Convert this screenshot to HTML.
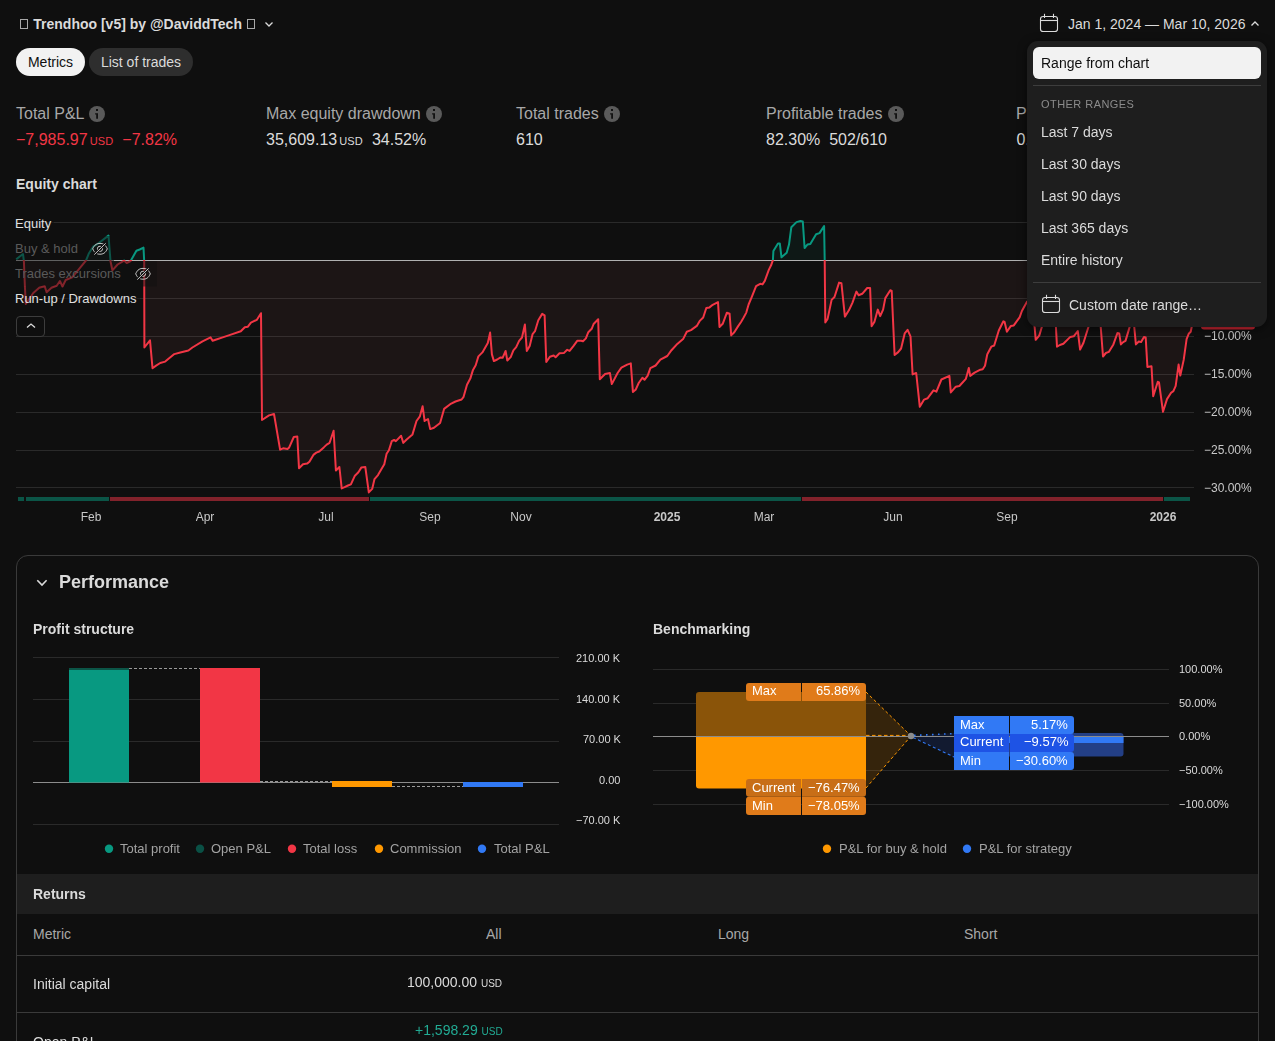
<!DOCTYPE html>
<html><head><meta charset="utf-8">
<style>
*{box-sizing:border-box;margin:0;padding:0}
html,body{width:1275px;height:1041px;overflow:hidden;background:#0f0f0f;font-family:"Liberation Sans",sans-serif;color:#dbdbdb}
.a{position:absolute;white-space:nowrap}
.tofu{display:inline-block;width:8px;height:11px;border:1px solid #dbdbdb;vertical-align:-1px}
.pill{position:absolute;top:48px;height:28px;border-radius:14px;font-size:14px;line-height:28px;text-align:center}
.lbl{font-size:16px;color:#a8a8a8}
.val{font-size:16px;color:#dbdbdb}
.usd{font-size:11px;letter-spacing:0.2px;margin-left:2px}
.info{display:inline-block;vertical-align:-3px;margin-left:1px}
.ax{font-size:12px;color:#c8c8c8;will-change:transform}
.xl{font-size:12px;color:#c8c8c8;transform:translateX(-50%);will-change:transform}
.dd{position:absolute;left:1027px;top:41px;width:240px;height:286px;background:#1e1e1e;border-radius:11px;will-change:transform;box-shadow:0 2px 10px rgba(0,0,0,0.55)}
.di{position:absolute;left:14px;font-size:14px;color:#dbdbdb}
.leg{font-size:13px}
.gs{will-change:transform}
.psl{font-size:11px;color:#dbdbdb;will-change:transform}
.pleg{font-size:13px;color:#a3a3a3;will-change:transform}
.blab{font-size:13px;color:#fff;line-height:18px;will-change:transform}
</style></head><body>
<!-- header -->
<div class="a" style="left:20px;top:19px;width:8px;height:10px;border:1px solid #a8a8a8"></div>
<div class="a" style="left:33.3px;top:16px;font-size:14px;font-weight:bold;color:#dbdbdb">Trendhoo [v5] by @DaviddTech</div>
<div class="a" style="left:247px;top:19px;width:8px;height:10px;border:1px solid #a8a8a8"></div>
<svg class="a" style="left:263px;top:19px" width="12" height="10" viewBox="0 0 12 10"><path d="M2.5 3.5 L6 7 L9.5 3.5" fill="none" stroke="#dbdbdb" stroke-width="1.3"/></svg>

<div class="pill" style="left:16px;width:69px;background:#f2f2f2;color:#0f0f0f">Metrics</div>
<div class="pill" style="left:89px;width:104px;background:#2e2e2e;color:#dbdbdb">List of trades</div>

<!-- date range -->
<svg class="a" style="left:1039px;top:13px" width="20" height="20" viewBox="0 0 20 20"><rect x="1.5" y="3.5" width="17" height="15" rx="2.6" fill="none" stroke="#dbdbdb" stroke-width="1.1"/><line x1="1.5" y1="7.5" x2="18.5" y2="7.5" stroke="#dbdbdb" stroke-width="1.1"/><line x1="5.5" y1="0.8" x2="5.5" y2="5" stroke="#dbdbdb" stroke-width="1.1"/><line x1="14.5" y1="0.8" x2="14.5" y2="5" stroke="#dbdbdb" stroke-width="1.1"/></svg>
<div class="a" style="left:1068px;top:16px;font-size:14px;color:#dbdbdb">Jan 1, 2024 — Mar 10, 2026</div>
<svg class="a" style="left:1249px;top:19px" width="12" height="10" viewBox="0 0 12 10"><path d="M2.5 6.5 L6 3 L9.5 6.5" fill="none" stroke="#dbdbdb" stroke-width="1.3"/></svg>

<!-- metrics -->
<div class="a lbl" style="left:16px;top:105px">Total P&amp;L <svg class="info" width="16" height="16" viewBox="0 0 16 16"><circle cx="8" cy="8" r="8" fill="#5a5a5a"/><rect x="7" y="3" width="2" height="2" fill="#111"/><path d="M6.1 7.2 H9 V12.8 H7.2 V8.4 H6.1 Z" fill="#111"/></svg></div>
<div class="a val" style="left:16px;top:131px;color:#f23645">−7,985.97<span class="usd">USD</span>&nbsp; −7.82%</div>
<div class="a lbl" style="left:266px;top:105px">Max equity drawdown <svg class="info" width="16" height="16" viewBox="0 0 16 16"><circle cx="8" cy="8" r="8" fill="#5a5a5a"/><rect x="7" y="3" width="2" height="2" fill="#111"/><path d="M6.1 7.2 H9 V12.8 H7.2 V8.4 H6.1 Z" fill="#111"/></svg></div>
<div class="a val" style="left:266px;top:131px">35,609.13<span class="usd">USD</span>&nbsp; 34.52%</div>
<div class="a lbl" style="left:516px;top:105px">Total trades <svg class="info" width="16" height="16" viewBox="0 0 16 16"><circle cx="8" cy="8" r="8" fill="#5a5a5a"/><rect x="7" y="3" width="2" height="2" fill="#111"/><path d="M6.1 7.2 H9 V12.8 H7.2 V8.4 H6.1 Z" fill="#111"/></svg></div>
<div class="a val" style="left:516px;top:131px">610</div>
<div class="a lbl" style="left:766px;top:105px">Profitable trades <svg class="info" width="16" height="16" viewBox="0 0 16 16"><circle cx="8" cy="8" r="8" fill="#5a5a5a"/><rect x="7" y="3" width="2" height="2" fill="#111"/><path d="M6.1 7.2 H9 V12.8 H7.2 V8.4 H6.1 Z" fill="#111"/></svg></div>
<div class="a val" style="left:766px;top:131px">82.30%&nbsp; 502/610</div>
<div class="a lbl" style="left:1016px;top:105px">Profit factor</div>
<div class="a val" style="left:1016.5px;top:131px">0.98</div>

<div class="a" style="left:16px;top:176px;font-size:14px;font-weight:bold">Equity chart</div>

<!-- chart -->
<svg class="a" style="left:0;top:0" width="1275" height="541" viewBox="0 0 1275 541">
<defs>
<clipPath id="above"><rect x="0" y="0" width="1275" height="260"/></clipPath>
<clipPath id="below"><rect x="0" y="260" width="1275" height="300"/></clipPath>
</defs>
<g stroke="#2a2a2a" stroke-width="1">
<line x1="16" y1="222.5" x2="1194" y2="222.5"/>
<line x1="16" y1="298.5" x2="1194" y2="298.5"/>
<line x1="16" y1="336.5" x2="1194" y2="336.5"/>
<line x1="16" y1="374.5" x2="1194" y2="374.5"/>
<line x1="16" y1="412.5" x2="1194" y2="412.5"/>
<line x1="16" y1="450.5" x2="1194" y2="450.5"/>
<line x1="16" y1="487.5" x2="1194" y2="487.5"/>
</g>
<path d="M16.2,260 L16.2,259.3 L23.0,254.0 L23.9,261.2 L24.9,286.5 L25.8,304.0 L33.3,293.0 L39.2,287.8 L44.7,286.2 L46.6,292.3 L51.5,287.8 L56.7,285.8 L59.9,281.0 L62.5,286.5 L65.7,280.0 L72.2,277.4 L85.9,260.7 L89.0,253.2 L93.4,246.3 L97.8,243.8 L108.5,235.6 L110.5,261.2 L112.4,270.3 L117.6,264.5 L124.1,260.6 L126.7,263.0 L130.6,261.0 L136.4,250.8 L139.7,249.5 L143.5,247.6 L144.2,261.2 L144.4,347.5 L150.0,340.4 L152.5,368.2 L156.1,365.6 L160.2,363.0 L165.2,361.6 L174.3,354.1 L180.3,352.5 L188.4,350.5 L192.4,347.5 L202.5,341.4 L210.6,337.4 L212.6,340.8 L215.6,339.8 L222.7,337.4 L228.7,335.4 L240.8,331.3 L244.8,327.3 L247.9,326.7 L250.9,322.7 L256.9,319.8 L261.0,313.2 L262.0,420.0 L269.0,415.4 L274.0,414.0 L280.1,449.7 L283.1,448.3 L287.5,449.0 L289.2,447.4 L293.8,437.0 L297.3,436.5 L299.0,468.2 L303.0,464.2 L307.1,463.6 L309.4,461.8 L313.4,454.9 L316.3,452.6 L319.2,451.5 L323.8,447.4 L326.7,444.6 L329.6,442.8 L333.6,430.7 L335.9,470.5 L339.4,467.0 L341.7,488.4 L344.6,487.2 L348.0,485.5 L350.9,484.3 L354.9,475.7 L358.4,472.2 L361.3,467.6 L365.3,467.0 L368.8,492.4 L372.2,488.9 L374.5,479.1 L378.0,475.1 L380.9,469.9 L384.3,464.2 L386.6,453.8 L388.9,450.3 L391.8,441.1 L394.1,439.9 L395.9,441.1 L401.1,435.8 L403.3,442.9 L406.4,439.8 L412.5,434.4 L416.5,421.0 L419.9,416.3 L422.6,406.2 L424.6,421.0 L428.0,419.0 L430.2,429.1 L434.0,427.7 L440.1,423.0 L444.1,408.9 L450.2,404.2 L455.5,401.5 L461.6,399.5 L463.6,396.8 L467.0,384.7 L470.3,378.6 L473.0,369.9 L475.7,365.2 L478.4,356.4 L482.4,352.4 L487.8,343.0 L490.1,332.6 L491.9,354.4 L493.9,361.1 L497.2,359.5 L500.6,357.4 L502.6,357.8 L505.6,351.0 L507.3,360.5 L510.7,357.1 L513.4,350.4 L516.2,347.1 L519.1,340.8 L522.0,337.5 L524.9,324.5 L526.8,350.9 L529.7,346.1 L532.6,334.1 L535.0,331.2 L538.3,320.2 L542.2,313.9 L544.6,315.4 L546.3,362.0 L549.9,356.7 L553.7,355.5 L555.6,357.2 L559.5,353.3 L563.8,353.1 L567.2,349.8 L569.6,350.9 L573.4,346.1 L577.2,340.8 L581.1,340.8 L583.0,341.3 L585.9,338.4 L588.3,332.2 L591.7,328.8 L593.6,324.0 L598.2,319.2 L599.8,379.3 L605.1,374.0 L609.9,373.0 L611.8,384.1 L617.6,373.0 L621.4,367.7 L627.2,364.6 L630.8,363.4 L632.9,391.9 L635.6,389.8 L638.7,383.0 L642.4,377.7 L644.5,379.8 L647.7,375.6 L650.4,368.2 L655.6,365.5 L660.4,359.7 L667.3,356.0 L671.5,350.2 L677.3,343.9 L683.1,339.1 L686.8,331.7 L691.0,330.1 L696.8,325.9 L700.0,320.6 L703.2,317.5 L706.3,308.0 L709.5,307.4 L712.7,304.8 L718.0,302.1 L719.5,327.0 L722.7,323.8 L726.9,312.7 L729.6,313.8 L731.2,335.4 L734.3,332.3 L738.0,326.4 L741.2,321.7 L743.5,317.8 L746.3,312.6 L748.6,304.5 L751.5,297.6 L756.1,286.1 L760.2,283.8 L762.5,284.4 L764.8,280.9 L768.8,269.9 L771.1,265.3 L772.9,260.1 L773.4,250.9 L778.0,243.4 L779.8,243.4 L781.5,257.3 L786.7,252.7 L789.0,244.6 L791.3,227.3 L796.5,222.1 L800.5,221.0 L802.8,221.5 L804.6,248.0 L807.4,244.6 L810.3,244.0 L816.1,234.2 L819.5,233.1 L824.1,226.1 L824.7,260.1 L825.3,322.4 L827.6,318.9 L831.6,299.9 L834.5,297.0 L839.1,282.6 L841.4,283.2 L844.9,316.6 L848.9,310.3 L852.4,302.8 L856.4,291.6 L858.6,295.2 L862.2,293.8 L867.2,288.0 L870.1,288.0 L871.6,326.2 L874.4,321.9 L877.8,309.6 L880.2,316.1 L883.1,309.6 L885.3,298.1 L890.3,290.2 L891.7,290.9 L894.6,355.0 L898.2,352.1 L901.1,348.5 L904.7,333.4 L907.6,329.8 L910.5,336.3 L912.6,374.4 L916.2,373.0 L919.8,406.8 L924.1,399.6 L927.7,398.2 L933.5,390.3 L936.4,391.7 L941.4,379.5 L949.4,375.9 L950.8,392.4 L955.8,386.7 L959.4,386.0 L965.9,378.8 L968.8,368.0 L970.2,375.9 L974.6,372.6 L980.4,369.7 L982.7,369.2 L985.0,365.7 L987.3,354.2 L991.3,346.7 L994.2,345.5 L998.8,330.5 L1003.4,321.3 L1004.6,321.9 L1006.9,331.7 L1010.9,325.9 L1013.8,325.4 L1019.6,317.3 L1021.9,311.0 L1027.0,301.7 L1031.0,300.0 L1034.6,326.5 L1035.7,339.8 L1039.2,335.7 L1042.0,326.5 L1046.0,310.0 L1052.0,310.0 L1055.9,326.5 L1057.0,346.7 L1059.9,345.0 L1063.4,343.8 L1070.3,336.9 L1073.7,336.3 L1077.8,331.1 L1080.1,349.6 L1083.5,342.7 L1088.6,326.5 L1092.0,315.0 L1098.0,315.0 L1100.7,326.5 L1103.0,356.5 L1105.9,353.0 L1108.8,351.9 L1113.4,344.4 L1117.5,332.9 L1119.2,333.4 L1120.9,344.4 L1123.2,342.1 L1125.5,340.9 L1129.6,327.1 L1132.0,318.0 L1134.2,326.5 L1135.9,344.4 L1138.8,341.5 L1141.1,342.1 L1144.0,336.9 L1145.7,337.5 L1147.4,366.9 L1151.5,366.3 L1153.2,396.3 L1157.8,381.8 L1159.0,382.4 L1163.0,411.8 L1167.0,399.1 L1171.1,392.8 L1173.4,391.1 L1175.7,385.9 L1178.6,364.6 L1180.3,375.5 L1183.7,359.9 L1186.6,339.2 L1188.9,333.4 L1190.7,331.7 L1191.8,326.5 L1193.0,322.0 L1193.0,260 Z" fill="#f27070" fill-opacity="0.058" clip-path="url(#below)"/>
<path d="M16.2,260 L16.2,259.3 L23.0,254.0 L23.9,261.2 L24.9,286.5 L25.8,304.0 L33.3,293.0 L39.2,287.8 L44.7,286.2 L46.6,292.3 L51.5,287.8 L56.7,285.8 L59.9,281.0 L62.5,286.5 L65.7,280.0 L72.2,277.4 L85.9,260.7 L89.0,253.2 L93.4,246.3 L97.8,243.8 L108.5,235.6 L110.5,261.2 L112.4,270.3 L117.6,264.5 L124.1,260.6 L126.7,263.0 L130.6,261.0 L136.4,250.8 L139.7,249.5 L143.5,247.6 L144.2,261.2 L144.4,347.5 L150.0,340.4 L152.5,368.2 L156.1,365.6 L160.2,363.0 L165.2,361.6 L174.3,354.1 L180.3,352.5 L188.4,350.5 L192.4,347.5 L202.5,341.4 L210.6,337.4 L212.6,340.8 L215.6,339.8 L222.7,337.4 L228.7,335.4 L240.8,331.3 L244.8,327.3 L247.9,326.7 L250.9,322.7 L256.9,319.8 L261.0,313.2 L262.0,420.0 L269.0,415.4 L274.0,414.0 L280.1,449.7 L283.1,448.3 L287.5,449.0 L289.2,447.4 L293.8,437.0 L297.3,436.5 L299.0,468.2 L303.0,464.2 L307.1,463.6 L309.4,461.8 L313.4,454.9 L316.3,452.6 L319.2,451.5 L323.8,447.4 L326.7,444.6 L329.6,442.8 L333.6,430.7 L335.9,470.5 L339.4,467.0 L341.7,488.4 L344.6,487.2 L348.0,485.5 L350.9,484.3 L354.9,475.7 L358.4,472.2 L361.3,467.6 L365.3,467.0 L368.8,492.4 L372.2,488.9 L374.5,479.1 L378.0,475.1 L380.9,469.9 L384.3,464.2 L386.6,453.8 L388.9,450.3 L391.8,441.1 L394.1,439.9 L395.9,441.1 L401.1,435.8 L403.3,442.9 L406.4,439.8 L412.5,434.4 L416.5,421.0 L419.9,416.3 L422.6,406.2 L424.6,421.0 L428.0,419.0 L430.2,429.1 L434.0,427.7 L440.1,423.0 L444.1,408.9 L450.2,404.2 L455.5,401.5 L461.6,399.5 L463.6,396.8 L467.0,384.7 L470.3,378.6 L473.0,369.9 L475.7,365.2 L478.4,356.4 L482.4,352.4 L487.8,343.0 L490.1,332.6 L491.9,354.4 L493.9,361.1 L497.2,359.5 L500.6,357.4 L502.6,357.8 L505.6,351.0 L507.3,360.5 L510.7,357.1 L513.4,350.4 L516.2,347.1 L519.1,340.8 L522.0,337.5 L524.9,324.5 L526.8,350.9 L529.7,346.1 L532.6,334.1 L535.0,331.2 L538.3,320.2 L542.2,313.9 L544.6,315.4 L546.3,362.0 L549.9,356.7 L553.7,355.5 L555.6,357.2 L559.5,353.3 L563.8,353.1 L567.2,349.8 L569.6,350.9 L573.4,346.1 L577.2,340.8 L581.1,340.8 L583.0,341.3 L585.9,338.4 L588.3,332.2 L591.7,328.8 L593.6,324.0 L598.2,319.2 L599.8,379.3 L605.1,374.0 L609.9,373.0 L611.8,384.1 L617.6,373.0 L621.4,367.7 L627.2,364.6 L630.8,363.4 L632.9,391.9 L635.6,389.8 L638.7,383.0 L642.4,377.7 L644.5,379.8 L647.7,375.6 L650.4,368.2 L655.6,365.5 L660.4,359.7 L667.3,356.0 L671.5,350.2 L677.3,343.9 L683.1,339.1 L686.8,331.7 L691.0,330.1 L696.8,325.9 L700.0,320.6 L703.2,317.5 L706.3,308.0 L709.5,307.4 L712.7,304.8 L718.0,302.1 L719.5,327.0 L722.7,323.8 L726.9,312.7 L729.6,313.8 L731.2,335.4 L734.3,332.3 L738.0,326.4 L741.2,321.7 L743.5,317.8 L746.3,312.6 L748.6,304.5 L751.5,297.6 L756.1,286.1 L760.2,283.8 L762.5,284.4 L764.8,280.9 L768.8,269.9 L771.1,265.3 L772.9,260.1 L773.4,250.9 L778.0,243.4 L779.8,243.4 L781.5,257.3 L786.7,252.7 L789.0,244.6 L791.3,227.3 L796.5,222.1 L800.5,221.0 L802.8,221.5 L804.6,248.0 L807.4,244.6 L810.3,244.0 L816.1,234.2 L819.5,233.1 L824.1,226.1 L824.7,260.1 L825.3,322.4 L827.6,318.9 L831.6,299.9 L834.5,297.0 L839.1,282.6 L841.4,283.2 L844.9,316.6 L848.9,310.3 L852.4,302.8 L856.4,291.6 L858.6,295.2 L862.2,293.8 L867.2,288.0 L870.1,288.0 L871.6,326.2 L874.4,321.9 L877.8,309.6 L880.2,316.1 L883.1,309.6 L885.3,298.1 L890.3,290.2 L891.7,290.9 L894.6,355.0 L898.2,352.1 L901.1,348.5 L904.7,333.4 L907.6,329.8 L910.5,336.3 L912.6,374.4 L916.2,373.0 L919.8,406.8 L924.1,399.6 L927.7,398.2 L933.5,390.3 L936.4,391.7 L941.4,379.5 L949.4,375.9 L950.8,392.4 L955.8,386.7 L959.4,386.0 L965.9,378.8 L968.8,368.0 L970.2,375.9 L974.6,372.6 L980.4,369.7 L982.7,369.2 L985.0,365.7 L987.3,354.2 L991.3,346.7 L994.2,345.5 L998.8,330.5 L1003.4,321.3 L1004.6,321.9 L1006.9,331.7 L1010.9,325.9 L1013.8,325.4 L1019.6,317.3 L1021.9,311.0 L1027.0,301.7 L1031.0,300.0 L1034.6,326.5 L1035.7,339.8 L1039.2,335.7 L1042.0,326.5 L1046.0,310.0 L1052.0,310.0 L1055.9,326.5 L1057.0,346.7 L1059.9,345.0 L1063.4,343.8 L1070.3,336.9 L1073.7,336.3 L1077.8,331.1 L1080.1,349.6 L1083.5,342.7 L1088.6,326.5 L1092.0,315.0 L1098.0,315.0 L1100.7,326.5 L1103.0,356.5 L1105.9,353.0 L1108.8,351.9 L1113.4,344.4 L1117.5,332.9 L1119.2,333.4 L1120.9,344.4 L1123.2,342.1 L1125.5,340.9 L1129.6,327.1 L1132.0,318.0 L1134.2,326.5 L1135.9,344.4 L1138.8,341.5 L1141.1,342.1 L1144.0,336.9 L1145.7,337.5 L1147.4,366.9 L1151.5,366.3 L1153.2,396.3 L1157.8,381.8 L1159.0,382.4 L1163.0,411.8 L1167.0,399.1 L1171.1,392.8 L1173.4,391.1 L1175.7,385.9 L1178.6,364.6 L1180.3,375.5 L1183.7,359.9 L1186.6,339.2 L1188.9,333.4 L1190.7,331.7 L1191.8,326.5 L1193.0,322.0 L1193.0,260 Z" fill="#089981" fill-opacity="0.07" clip-path="url(#above)"/>
<line x1="16" y1="260.5" x2="1194" y2="260.5" stroke="#b0b0b0" stroke-width="1"/>
<path d="M16.2,259.3 L23.0,254.0 L23.9,261.2 L24.9,286.5 L25.8,304.0 L33.3,293.0 L39.2,287.8 L44.7,286.2 L46.6,292.3 L51.5,287.8 L56.7,285.8 L59.9,281.0 L62.5,286.5 L65.7,280.0 L72.2,277.4 L85.9,260.7 L89.0,253.2 L93.4,246.3 L97.8,243.8 L108.5,235.6 L110.5,261.2 L112.4,270.3 L117.6,264.5 L124.1,260.6 L126.7,263.0 L130.6,261.0 L136.4,250.8 L139.7,249.5 L143.5,247.6 L144.2,261.2 L144.4,347.5 L150.0,340.4 L152.5,368.2 L156.1,365.6 L160.2,363.0 L165.2,361.6 L174.3,354.1 L180.3,352.5 L188.4,350.5 L192.4,347.5 L202.5,341.4 L210.6,337.4 L212.6,340.8 L215.6,339.8 L222.7,337.4 L228.7,335.4 L240.8,331.3 L244.8,327.3 L247.9,326.7 L250.9,322.7 L256.9,319.8 L261.0,313.2 L262.0,420.0 L269.0,415.4 L274.0,414.0 L280.1,449.7 L283.1,448.3 L287.5,449.0 L289.2,447.4 L293.8,437.0 L297.3,436.5 L299.0,468.2 L303.0,464.2 L307.1,463.6 L309.4,461.8 L313.4,454.9 L316.3,452.6 L319.2,451.5 L323.8,447.4 L326.7,444.6 L329.6,442.8 L333.6,430.7 L335.9,470.5 L339.4,467.0 L341.7,488.4 L344.6,487.2 L348.0,485.5 L350.9,484.3 L354.9,475.7 L358.4,472.2 L361.3,467.6 L365.3,467.0 L368.8,492.4 L372.2,488.9 L374.5,479.1 L378.0,475.1 L380.9,469.9 L384.3,464.2 L386.6,453.8 L388.9,450.3 L391.8,441.1 L394.1,439.9 L395.9,441.1 L401.1,435.8 L403.3,442.9 L406.4,439.8 L412.5,434.4 L416.5,421.0 L419.9,416.3 L422.6,406.2 L424.6,421.0 L428.0,419.0 L430.2,429.1 L434.0,427.7 L440.1,423.0 L444.1,408.9 L450.2,404.2 L455.5,401.5 L461.6,399.5 L463.6,396.8 L467.0,384.7 L470.3,378.6 L473.0,369.9 L475.7,365.2 L478.4,356.4 L482.4,352.4 L487.8,343.0 L490.1,332.6 L491.9,354.4 L493.9,361.1 L497.2,359.5 L500.6,357.4 L502.6,357.8 L505.6,351.0 L507.3,360.5 L510.7,357.1 L513.4,350.4 L516.2,347.1 L519.1,340.8 L522.0,337.5 L524.9,324.5 L526.8,350.9 L529.7,346.1 L532.6,334.1 L535.0,331.2 L538.3,320.2 L542.2,313.9 L544.6,315.4 L546.3,362.0 L549.9,356.7 L553.7,355.5 L555.6,357.2 L559.5,353.3 L563.8,353.1 L567.2,349.8 L569.6,350.9 L573.4,346.1 L577.2,340.8 L581.1,340.8 L583.0,341.3 L585.9,338.4 L588.3,332.2 L591.7,328.8 L593.6,324.0 L598.2,319.2 L599.8,379.3 L605.1,374.0 L609.9,373.0 L611.8,384.1 L617.6,373.0 L621.4,367.7 L627.2,364.6 L630.8,363.4 L632.9,391.9 L635.6,389.8 L638.7,383.0 L642.4,377.7 L644.5,379.8 L647.7,375.6 L650.4,368.2 L655.6,365.5 L660.4,359.7 L667.3,356.0 L671.5,350.2 L677.3,343.9 L683.1,339.1 L686.8,331.7 L691.0,330.1 L696.8,325.9 L700.0,320.6 L703.2,317.5 L706.3,308.0 L709.5,307.4 L712.7,304.8 L718.0,302.1 L719.5,327.0 L722.7,323.8 L726.9,312.7 L729.6,313.8 L731.2,335.4 L734.3,332.3 L738.0,326.4 L741.2,321.7 L743.5,317.8 L746.3,312.6 L748.6,304.5 L751.5,297.6 L756.1,286.1 L760.2,283.8 L762.5,284.4 L764.8,280.9 L768.8,269.9 L771.1,265.3 L772.9,260.1 L773.4,250.9 L778.0,243.4 L779.8,243.4 L781.5,257.3 L786.7,252.7 L789.0,244.6 L791.3,227.3 L796.5,222.1 L800.5,221.0 L802.8,221.5 L804.6,248.0 L807.4,244.6 L810.3,244.0 L816.1,234.2 L819.5,233.1 L824.1,226.1 L824.7,260.1 L825.3,322.4 L827.6,318.9 L831.6,299.9 L834.5,297.0 L839.1,282.6 L841.4,283.2 L844.9,316.6 L848.9,310.3 L852.4,302.8 L856.4,291.6 L858.6,295.2 L862.2,293.8 L867.2,288.0 L870.1,288.0 L871.6,326.2 L874.4,321.9 L877.8,309.6 L880.2,316.1 L883.1,309.6 L885.3,298.1 L890.3,290.2 L891.7,290.9 L894.6,355.0 L898.2,352.1 L901.1,348.5 L904.7,333.4 L907.6,329.8 L910.5,336.3 L912.6,374.4 L916.2,373.0 L919.8,406.8 L924.1,399.6 L927.7,398.2 L933.5,390.3 L936.4,391.7 L941.4,379.5 L949.4,375.9 L950.8,392.4 L955.8,386.7 L959.4,386.0 L965.9,378.8 L968.8,368.0 L970.2,375.9 L974.6,372.6 L980.4,369.7 L982.7,369.2 L985.0,365.7 L987.3,354.2 L991.3,346.7 L994.2,345.5 L998.8,330.5 L1003.4,321.3 L1004.6,321.9 L1006.9,331.7 L1010.9,325.9 L1013.8,325.4 L1019.6,317.3 L1021.9,311.0 L1027.0,301.7 L1031.0,300.0 L1034.6,326.5 L1035.7,339.8 L1039.2,335.7 L1042.0,326.5 L1046.0,310.0 L1052.0,310.0 L1055.9,326.5 L1057.0,346.7 L1059.9,345.0 L1063.4,343.8 L1070.3,336.9 L1073.7,336.3 L1077.8,331.1 L1080.1,349.6 L1083.5,342.7 L1088.6,326.5 L1092.0,315.0 L1098.0,315.0 L1100.7,326.5 L1103.0,356.5 L1105.9,353.0 L1108.8,351.9 L1113.4,344.4 L1117.5,332.9 L1119.2,333.4 L1120.9,344.4 L1123.2,342.1 L1125.5,340.9 L1129.6,327.1 L1132.0,318.0 L1134.2,326.5 L1135.9,344.4 L1138.8,341.5 L1141.1,342.1 L1144.0,336.9 L1145.7,337.5 L1147.4,366.9 L1151.5,366.3 L1153.2,396.3 L1157.8,381.8 L1159.0,382.4 L1163.0,411.8 L1167.0,399.1 L1171.1,392.8 L1173.4,391.1 L1175.7,385.9 L1178.6,364.6 L1180.3,375.5 L1183.7,359.9 L1186.6,339.2 L1188.9,333.4 L1190.7,331.7 L1191.8,326.5 L1193.0,322.0" fill="none" stroke="#f23645" stroke-width="2" stroke-linejoin="round" clip-path="url(#below)"/>
<path d="M16.2,259.3 L23.0,254.0 L23.9,261.2 L24.9,286.5 L25.8,304.0 L33.3,293.0 L39.2,287.8 L44.7,286.2 L46.6,292.3 L51.5,287.8 L56.7,285.8 L59.9,281.0 L62.5,286.5 L65.7,280.0 L72.2,277.4 L85.9,260.7 L89.0,253.2 L93.4,246.3 L97.8,243.8 L108.5,235.6 L110.5,261.2 L112.4,270.3 L117.6,264.5 L124.1,260.6 L126.7,263.0 L130.6,261.0 L136.4,250.8 L139.7,249.5 L143.5,247.6 L144.2,261.2 L144.4,347.5 L150.0,340.4 L152.5,368.2 L156.1,365.6 L160.2,363.0 L165.2,361.6 L174.3,354.1 L180.3,352.5 L188.4,350.5 L192.4,347.5 L202.5,341.4 L210.6,337.4 L212.6,340.8 L215.6,339.8 L222.7,337.4 L228.7,335.4 L240.8,331.3 L244.8,327.3 L247.9,326.7 L250.9,322.7 L256.9,319.8 L261.0,313.2 L262.0,420.0 L269.0,415.4 L274.0,414.0 L280.1,449.7 L283.1,448.3 L287.5,449.0 L289.2,447.4 L293.8,437.0 L297.3,436.5 L299.0,468.2 L303.0,464.2 L307.1,463.6 L309.4,461.8 L313.4,454.9 L316.3,452.6 L319.2,451.5 L323.8,447.4 L326.7,444.6 L329.6,442.8 L333.6,430.7 L335.9,470.5 L339.4,467.0 L341.7,488.4 L344.6,487.2 L348.0,485.5 L350.9,484.3 L354.9,475.7 L358.4,472.2 L361.3,467.6 L365.3,467.0 L368.8,492.4 L372.2,488.9 L374.5,479.1 L378.0,475.1 L380.9,469.9 L384.3,464.2 L386.6,453.8 L388.9,450.3 L391.8,441.1 L394.1,439.9 L395.9,441.1 L401.1,435.8 L403.3,442.9 L406.4,439.8 L412.5,434.4 L416.5,421.0 L419.9,416.3 L422.6,406.2 L424.6,421.0 L428.0,419.0 L430.2,429.1 L434.0,427.7 L440.1,423.0 L444.1,408.9 L450.2,404.2 L455.5,401.5 L461.6,399.5 L463.6,396.8 L467.0,384.7 L470.3,378.6 L473.0,369.9 L475.7,365.2 L478.4,356.4 L482.4,352.4 L487.8,343.0 L490.1,332.6 L491.9,354.4 L493.9,361.1 L497.2,359.5 L500.6,357.4 L502.6,357.8 L505.6,351.0 L507.3,360.5 L510.7,357.1 L513.4,350.4 L516.2,347.1 L519.1,340.8 L522.0,337.5 L524.9,324.5 L526.8,350.9 L529.7,346.1 L532.6,334.1 L535.0,331.2 L538.3,320.2 L542.2,313.9 L544.6,315.4 L546.3,362.0 L549.9,356.7 L553.7,355.5 L555.6,357.2 L559.5,353.3 L563.8,353.1 L567.2,349.8 L569.6,350.9 L573.4,346.1 L577.2,340.8 L581.1,340.8 L583.0,341.3 L585.9,338.4 L588.3,332.2 L591.7,328.8 L593.6,324.0 L598.2,319.2 L599.8,379.3 L605.1,374.0 L609.9,373.0 L611.8,384.1 L617.6,373.0 L621.4,367.7 L627.2,364.6 L630.8,363.4 L632.9,391.9 L635.6,389.8 L638.7,383.0 L642.4,377.7 L644.5,379.8 L647.7,375.6 L650.4,368.2 L655.6,365.5 L660.4,359.7 L667.3,356.0 L671.5,350.2 L677.3,343.9 L683.1,339.1 L686.8,331.7 L691.0,330.1 L696.8,325.9 L700.0,320.6 L703.2,317.5 L706.3,308.0 L709.5,307.4 L712.7,304.8 L718.0,302.1 L719.5,327.0 L722.7,323.8 L726.9,312.7 L729.6,313.8 L731.2,335.4 L734.3,332.3 L738.0,326.4 L741.2,321.7 L743.5,317.8 L746.3,312.6 L748.6,304.5 L751.5,297.6 L756.1,286.1 L760.2,283.8 L762.5,284.4 L764.8,280.9 L768.8,269.9 L771.1,265.3 L772.9,260.1 L773.4,250.9 L778.0,243.4 L779.8,243.4 L781.5,257.3 L786.7,252.7 L789.0,244.6 L791.3,227.3 L796.5,222.1 L800.5,221.0 L802.8,221.5 L804.6,248.0 L807.4,244.6 L810.3,244.0 L816.1,234.2 L819.5,233.1 L824.1,226.1 L824.7,260.1 L825.3,322.4 L827.6,318.9 L831.6,299.9 L834.5,297.0 L839.1,282.6 L841.4,283.2 L844.9,316.6 L848.9,310.3 L852.4,302.8 L856.4,291.6 L858.6,295.2 L862.2,293.8 L867.2,288.0 L870.1,288.0 L871.6,326.2 L874.4,321.9 L877.8,309.6 L880.2,316.1 L883.1,309.6 L885.3,298.1 L890.3,290.2 L891.7,290.9 L894.6,355.0 L898.2,352.1 L901.1,348.5 L904.7,333.4 L907.6,329.8 L910.5,336.3 L912.6,374.4 L916.2,373.0 L919.8,406.8 L924.1,399.6 L927.7,398.2 L933.5,390.3 L936.4,391.7 L941.4,379.5 L949.4,375.9 L950.8,392.4 L955.8,386.7 L959.4,386.0 L965.9,378.8 L968.8,368.0 L970.2,375.9 L974.6,372.6 L980.4,369.7 L982.7,369.2 L985.0,365.7 L987.3,354.2 L991.3,346.7 L994.2,345.5 L998.8,330.5 L1003.4,321.3 L1004.6,321.9 L1006.9,331.7 L1010.9,325.9 L1013.8,325.4 L1019.6,317.3 L1021.9,311.0 L1027.0,301.7 L1031.0,300.0 L1034.6,326.5 L1035.7,339.8 L1039.2,335.7 L1042.0,326.5 L1046.0,310.0 L1052.0,310.0 L1055.9,326.5 L1057.0,346.7 L1059.9,345.0 L1063.4,343.8 L1070.3,336.9 L1073.7,336.3 L1077.8,331.1 L1080.1,349.6 L1083.5,342.7 L1088.6,326.5 L1092.0,315.0 L1098.0,315.0 L1100.7,326.5 L1103.0,356.5 L1105.9,353.0 L1108.8,351.9 L1113.4,344.4 L1117.5,332.9 L1119.2,333.4 L1120.9,344.4 L1123.2,342.1 L1125.5,340.9 L1129.6,327.1 L1132.0,318.0 L1134.2,326.5 L1135.9,344.4 L1138.8,341.5 L1141.1,342.1 L1144.0,336.9 L1145.7,337.5 L1147.4,366.9 L1151.5,366.3 L1153.2,396.3 L1157.8,381.8 L1159.0,382.4 L1163.0,411.8 L1167.0,399.1 L1171.1,392.8 L1173.4,391.1 L1175.7,385.9 L1178.6,364.6 L1180.3,375.5 L1183.7,359.9 L1186.6,339.2 L1188.9,333.4 L1190.7,331.7 L1191.8,326.5 L1193.0,322.0" fill="none" stroke="#089981" stroke-width="2" stroke-linejoin="round" clip-path="url(#above)"/>
<g>
<rect x="18" y="497" width="6" height="4" fill="#0b5547"/>
<rect x="26" y="497" width="83" height="4" fill="#0b5547"/>
<rect x="110" y="497" width="259" height="4" fill="#82222b"/>
<rect x="370" y="497" width="431" height="4" fill="#0b5547"/>
<rect x="802" y="497" width="361" height="4" fill="#82222b"/>
<rect x="1164" y="497" width="26" height="4" fill="#0b5547"/>
</g>
<rect x="1201" y="316" width="54" height="13.6" rx="3" fill="#cf2734"/>
</svg>
<!-- legend -->
<svg class="a" style="left:0;top:200px" width="200" height="140" viewBox="0 200 200 140">
<rect x="10" y="211" width="44" height="25" fill="#0f0f0f" fill-opacity="0.5"/>
<rect x="10" y="236" width="104" height="25" fill="#0f0f0f" fill-opacity="0.5"/>
<rect x="10" y="261" width="147" height="25.5" fill="#0f0f0f" fill-opacity="0.5"/>
<rect x="10" y="286.5" width="130" height="25" fill="#0f0f0f" fill-opacity="0.5"/>
<g transform="translate(92,243)" fill="none">
<path d="M0.7,5.8 C2.5,1.5 5,0.4 8,0.4 C11,0.4 13.5,1.5 15.3,5.8 C13.5,10.1 11,11.2 8,11.2 C5,11.2 2.5,10.1 0.7,5.8 Z" stroke="#c8c8c8" stroke-width="1"/>
<circle cx="8" cy="5.8" r="2.6" stroke="#c8c8c8" stroke-width="1"/>
<line x1="2.3" y1="11.6" x2="13.7" y2="0.3" stroke="#111" stroke-width="2.6"/>
<line x1="2.3" y1="11.6" x2="13.7" y2="0.3" stroke="#c8c8c8" stroke-width="1"/>
</g>
<g transform="translate(135,268)" fill="none">
<path d="M0.7,5.8 C2.5,1.5 5,0.4 8,0.4 C11,0.4 13.5,1.5 15.3,5.8 C13.5,10.1 11,11.2 8,11.2 C5,11.2 2.5,10.1 0.7,5.8 Z" stroke="#c8c8c8" stroke-width="1"/>
<circle cx="8" cy="5.8" r="2.6" stroke="#c8c8c8" stroke-width="1"/>
<line x1="2.3" y1="11.6" x2="13.7" y2="0.3" stroke="#111" stroke-width="2.6"/>
<line x1="2.3" y1="11.6" x2="13.7" y2="0.3" stroke="#c8c8c8" stroke-width="1"/>
</g>
</svg>
<div class="a leg" style="left:15px;top:216px;color:#e0e0e0">Equity</div>
<div class="a leg" style="left:15px;top:241px;color:#5a5a5a">Buy &amp; hold</div>
<div class="a leg" style="left:15px;top:266px;color:#5a5a5a">Trades excursions</div>
<div class="a leg" style="left:15px;top:291px;color:#e0e0e0">Run-up / Drawdowns</div>
<div class="a" style="left:16px;top:316px;width:29px;height:21px;border:1px solid #3d3d3d;border-radius:4px"></div>
<svg class="a" style="left:24.5px;top:321px" width="12" height="10" viewBox="0 0 12 10"><path d="M2 6.5 L6 3 L10 6.5" fill="none" stroke="#dbdbdb" stroke-width="1.3"/></svg>

<!-- axis labels -->
<div class="a ax" style="left:1204px;top:329px">−10.00%</div>
<div class="a ax" style="left:1204px;top:367px">−15.00%</div>
<div class="a ax" style="left:1204px;top:405px">−20.00%</div>
<div class="a ax" style="left:1204px;top:443px">−25.00%</div>
<div class="a ax" style="left:1204px;top:481px">−30.00%</div>
<div class="a xl" style="left:91px;top:510px">Feb</div>
<div class="a xl" style="left:205px;top:510px">Apr</div>
<div class="a xl" style="left:326px;top:510px">Jul</div>
<div class="a xl" style="left:430px;top:510px">Sep</div>
<div class="a xl" style="left:521px;top:510px">Nov</div>
<div class="a xl" style="left:667px;top:510px;font-weight:bold">2025</div>
<div class="a xl" style="left:764px;top:510px">Mar</div>
<div class="a xl" style="left:893px;top:510px">Jun</div>
<div class="a xl" style="left:1007px;top:510px">Sep</div>
<div class="a xl" style="left:1163px;top:510px;font-weight:bold">2026</div>

<!-- dropdown -->
<div class="dd">
 <div style="position:absolute;left:6px;top:6px;width:228px;height:32px;background:#f2f2f2;border-radius:6px"></div>
 <div class="di" style="top:14px;color:#0f0f0f">Range from chart</div>
 <div style="position:absolute;left:6px;top:44px;width:228px;height:1px;background:#3d3d3d"></div>
 <div class="di" style="top:57px;font-size:11px;color:#8c8c8c;letter-spacing:0.45px">OTHER RANGES</div>
 <div class="di" style="top:83px">Last 7 days</div>
 <div class="di" style="top:115px">Last 30 days</div>
 <div class="di" style="top:147px">Last 90 days</div>
 <div class="di" style="top:179px">Last 365 days</div>
 <div class="di" style="top:211px">Entire history</div>
 <div style="position:absolute;left:6px;top:241px;width:228px;height:1px;background:#3d3d3d"></div>
 <svg style="position:absolute;left:14px;top:253px" width="20" height="20" viewBox="0 0 20 20"><rect x="1.5" y="3.5" width="17" height="15" rx="2.6" fill="none" stroke="#dbdbdb" stroke-width="1.1"/><line x1="1.5" y1="7.5" x2="18.5" y2="7.5" stroke="#dbdbdb" stroke-width="1.1"/><line x1="5.5" y1="0.8" x2="5.5" y2="5" stroke="#dbdbdb" stroke-width="1.1"/><line x1="14.5" y1="0.8" x2="14.5" y2="5" stroke="#dbdbdb" stroke-width="1.1"/></svg>
 <div class="di" style="left:42px;top:256px">Custom date range…</div>
</div>

<!-- performance card -->
<div class="a" style="left:16px;top:555px;width:1243px;height:600px;border:1px solid #3a3a3a;border-radius:12px"></div>
<svg class="a" style="left:35px;top:577px" width="14" height="10" viewBox="0 0 14 10"><path d="M2.3 3.3 L7 8 L11.6 3.3" fill="none" stroke="#dbdbdb" stroke-width="1.6"/></svg>
<div class="a gs" style="left:59px;top:572px;font-size:18px;font-weight:bold">Performance</div>

<div class="a gs" style="left:33px;top:621px;font-size:14px;font-weight:bold">Profit structure</div>
<div class="a gs" style="left:653px;top:621px;font-size:14px;font-weight:bold">Benchmarking</div>


<!-- profit structure -->
<svg class="a" style="left:0;top:640px" width="1275" height="220" viewBox="0 640 1275 220">
<g stroke="#2a2a2a" stroke-width="1">
<line x1="33" y1="657.5" x2="559" y2="657.5"/>
<line x1="33" y1="699.5" x2="559" y2="699.5"/>
<line x1="33" y1="741.5" x2="559" y2="741.5"/>
<line x1="33" y1="824.5" x2="559" y2="824.5"/>
</g>
<line x1="33" y1="782.5" x2="559" y2="782.5" stroke="#8c8c8c" stroke-width="1"/>
<rect x="69" y="668" width="60" height="114.5" fill="#089981"/>
<rect x="69" y="668" width="60" height="2" fill="#0b5547"/>
<rect x="200" y="668" width="60" height="114.5" fill="#f23645"/>
<g stroke="#9a9a9a" stroke-width="1" stroke-dasharray="3 2">
<line x1="129" y1="668.5" x2="200" y2="668.5"/>
<line x1="260" y1="781.5" x2="332" y2="781.5"/>
<line x1="392" y1="786.5" x2="463" y2="786.5"/>
</g>
<rect x="332" y="781" width="60" height="6" fill="#ff9800"/>
<rect x="463" y="782" width="60" height="5" fill="#3179f5"/>

<!-- benchmarking -->
<g stroke="#2a2a2a" stroke-width="1">
<line x1="653" y1="669.5" x2="1169" y2="669.5"/>
<line x1="653" y1="703.5" x2="1169" y2="703.5"/>
<line x1="653" y1="770.5" x2="1169" y2="770.5"/>
<line x1="653" y1="804.5" x2="1169" y2="804.5"/>
</g>
<polygon points="866,692 911,736 866,788" fill="#ff9800" fill-opacity="0.16"/>
<polygon points="911,736 954,733 954,757" fill="#2962ff" fill-opacity="0.14"/>
<path d="M699,692 H863 Q866,692 866,695 V736.5 H696 V695 Q696,692 699,692 Z" fill="#8a5409"/>
<path d="M696,736.5 H866 V788.5 H699 Q696,788.5 696,785.5 Z" fill="#ff9800"/>
<path d="M954,733 H1120.5 Q1123.5,733 1123.5,736 V753.5 Q1123.5,756.5 1120.5,756.5 H954 Z" fill="#233f86"/>
<rect x="954" y="736.5" width="169.5" height="6.5" fill="#3179f5"/>
<line x1="653" y1="736.5" x2="1169" y2="736.5" stroke="#8c8c8c" stroke-width="1"/>
<g stroke="#ff9800" stroke-width="1" fill="none">
<line x1="866" y1="692" x2="911" y2="736" stroke-dasharray="3 2.5"/>
<line x1="866" y1="788" x2="911" y2="736" stroke-dasharray="3 2.5"/>
<line x1="866" y1="735.4" x2="911" y2="735.4" stroke-dasharray="3.5 2.5"/>
</g>
<g stroke="#3179f5" fill="none">
<line x1="914" y1="735.4" x2="954" y2="733.6" stroke-width="1.6" stroke-dasharray="1.6 4.4"/>
<line x1="913" y1="737.5" x2="954" y2="757" stroke-width="1.1" stroke-dasharray="3 2.5"/>
</g>
<circle cx="911" cy="736" r="3.2" fill="#8c8c8c"/>
<!-- orange labels -->
<path d="M749,683 H801 V701 H749 Q746,701 746,698 V686 Q746,683 749,683 Z" fill="#e07b1a"/>
<path d="M802,683 H863 Q866,683 866,686 V698 Q866,701 863,701 H802 Z" fill="#e07b1a"/>
<path d="M749,779 H801 V796.7 H749 Q746,796.7 746,793.7 V782 Q746,779 749,779 Z" fill="#c86e17"/>
<path d="M802,779 H863 Q866,779 866,782 V793.7 Q866,796.7 863,796.7 H802 Z" fill="#c86e17"/>
<path d="M749,796.7 H801 V815 H749 Q746,815 746,812 V799.7 Q746,796.7 749,796.7 Z" fill="#e07b1a"/>
<path d="M802,796.7 H863 Q866,796.7 866,799.7 V812 Q866,815 863,815 H802 Z" fill="#e07b1a"/>
<!-- blue labels -->
<rect x="954" y="716" width="55" height="18" fill="#3179f5"/>
<path d="M1010,716 H1071 Q1074,716 1074,719 V731 Q1074,734 1071,734 H1010 Z" fill="#3179f5"/>
<rect x="954" y="734" width="55" height="18" fill="#1e53e5"/>
<path d="M1010,734 H1071 Q1074,734 1074,737 V749 Q1074,752 1071,752 H1010 Z" fill="#1e53e5"/>
<rect x="954" y="752" width="55" height="18" fill="#3179f5"/>
<path d="M1010,752 H1071 Q1074,752 1074,755 V767 Q1074,770 1071,770 H1010 Z" fill="#3179f5"/>
<!-- legend dots -->
<circle cx="109" cy="848.8" r="4.2" fill="#089981"/>
<circle cx="200" cy="848.8" r="4.2" fill="#0a5045"/>
<circle cx="292" cy="848.8" r="4.2" fill="#f23645"/>
<circle cx="379" cy="848.8" r="4.2" fill="#ff9800"/>
<circle cx="482" cy="848.8" r="4.2" fill="#3179f5"/>
<circle cx="827" cy="848.8" r="4.2" fill="#ff9800"/>
<circle cx="967" cy="848.8" r="4.2" fill="#3179f5"/>
</svg>
<div class="a psl" style="right:654.5px;top:652px">210.00 K</div>
<div class="a psl" style="right:654.5px;top:692.5px">140.00 K</div>
<div class="a psl" style="right:654.5px;top:733px">70.00 K</div>
<div class="a psl" style="right:654.5px;top:774px">0.00</div>
<div class="a psl" style="right:654.5px;top:814px">−70.00 K</div>
<div class="a psl" style="left:1179px;top:663px">100.00%</div>
<div class="a psl" style="left:1179px;top:697px">50.00%</div>
<div class="a psl" style="left:1179px;top:730px">0.00%</div>
<div class="a psl" style="left:1179px;top:764px">−50.00%</div>
<div class="a psl" style="left:1179px;top:798px">−100.00%</div>
<div class="a pleg" style="left:120.3px;top:841px">Total profit</div>
<div class="a pleg" style="left:211.3px;top:841px">Open P&amp;L</div>
<div class="a pleg" style="left:303.3px;top:841px">Total loss</div>
<div class="a pleg" style="left:390.3px;top:841px">Commission</div>
<div class="a pleg" style="left:494.3px;top:841px">Total P&amp;L</div>
<div class="a pleg" style="left:838.8px;top:841px">P&amp;L for buy &amp; hold</div>
<div class="a pleg" style="left:978.8px;top:841px">P&amp;L for strategy</div>
<div class="a blab" style="left:752px;top:682px">Max</div>
<div class="a blab" style="right:415px;top:682px">65.86%</div>
<div class="a blab" style="left:752px;top:779px">Current</div>
<div class="a blab" style="right:415px;top:779px">−76.47%</div>
<div class="a blab" style="left:752px;top:797px">Min</div>
<div class="a blab" style="right:415px;top:797px">−78.05%</div>
<div class="a blab" style="left:960px;top:716px">Max</div>
<div class="a blab" style="right:207px;top:716px">5.17%</div>
<div class="a blab" style="left:960px;top:733px">Current</div>
<div class="a blab" style="right:207px;top:733px">−9.57%</div>
<div class="a blab" style="left:960px;top:752px">Min</div>
<div class="a blab" style="right:207px;top:752px">−30.60%</div>

<!-- returns -->
<div class="a" style="left:17px;top:874px;width:1241px;height:40px;background:#1e1e1e"></div>
<div class="a gs" style="left:33px;top:886px;font-size:14px;font-weight:bold">Returns</div>
<div class="a" style="left:33px;top:926px;font-size:14px;color:#a8a8a8">Metric</div>
<div class="a" style="left:486px;top:926px;font-size:14px;color:#a8a8a8">All</div>
<div class="a" style="left:718px;top:926px;font-size:14px;color:#a8a8a8">Long</div>
<div class="a" style="left:964px;top:926px;font-size:14px;color:#a8a8a8">Short</div>
<div class="a" style="left:17px;top:955px;width:1241px;height:1px;background:#3a3a3a"></div>
<div class="a gs" style="left:33px;top:976px;font-size:14px">Initial capital</div>
<div class="a gs" style="left:407px;top:974px;font-size:14px">100,000.00 <span style="font-size:10px">USD</span></div>
<div class="a" style="left:17px;top:1012px;width:1241px;height:1px;background:#3a3a3a"></div>
<div class="a gs" style="left:33px;top:1033.5px;font-size:14px">Open P&amp;L</div>
<div class="a gs" style="left:415px;top:1022px;font-size:14px;color:#22ab94">+1,598.29 <span style="font-size:10px">USD</span></div>
</body></html>
